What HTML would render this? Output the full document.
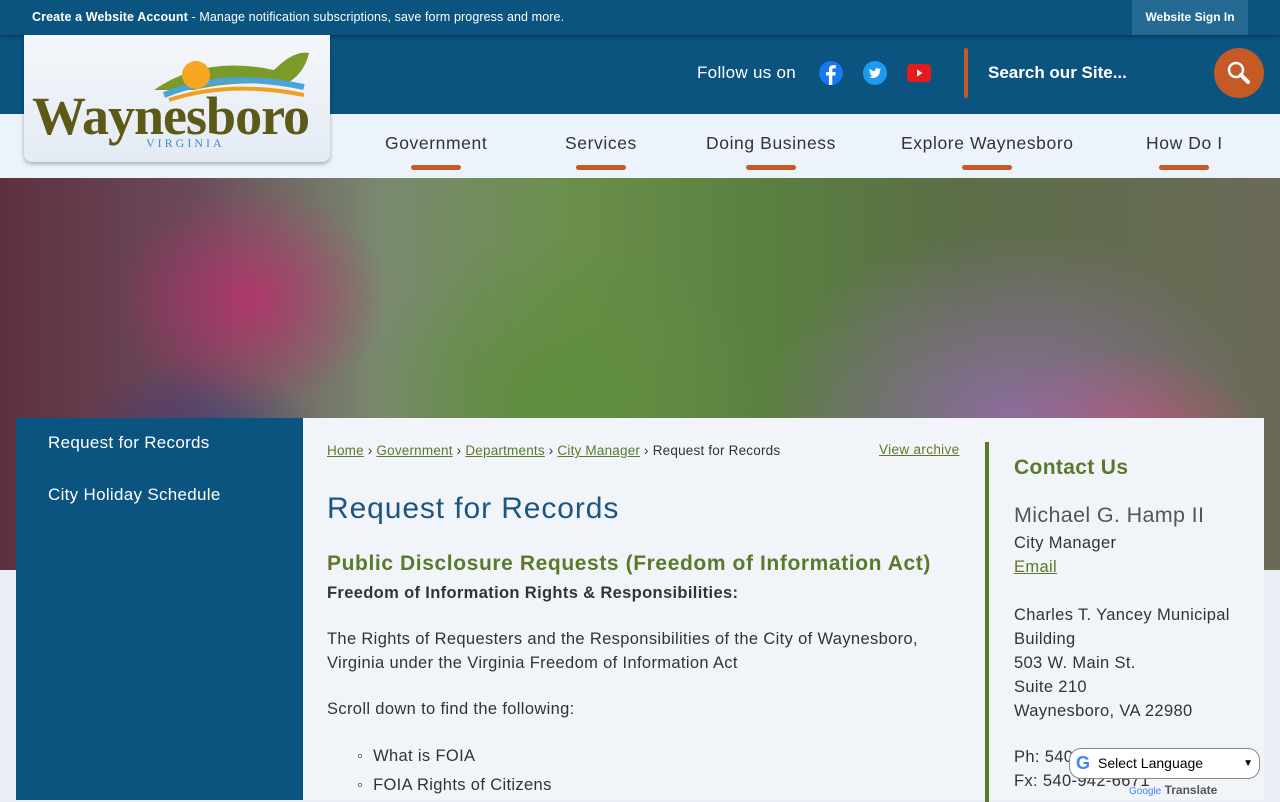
<!DOCTYPE html>
<html><head><meta charset="utf-8"><style>
*{margin:0;padding:0;box-sizing:border-box}
body{width:1280px;height:800px;overflow:hidden;font-family:"Liberation Sans",sans-serif;background:#e9eef4;position:relative}
.top{position:absolute;top:0;left:0;width:1280px;height:35px;background:#0b5480;color:#fff;font-size:12.5px;box-shadow:0 2px 3px rgba(0,0,0,.3);z-index:2}
.top .t{position:absolute;left:32px;top:10px;letter-spacing:.1px}
.top .si{position:absolute;left:1132px;top:0;width:116px;height:35px;background:#246a93;font-size:12px;font-weight:bold;text-align:center;line-height:35px}
.hdr{position:absolute;top:35px;left:0;width:1280px;height:79px;background:#0b5480}
.nav{position:absolute;top:114px;left:0;width:1280px;height:64px;background:#edf3fa}
.nav a{position:absolute;top:19px;font-size:17.5px;color:#333;text-decoration:none;letter-spacing:.6px}
.nav a:after{content:"";position:absolute;left:50%;margin-left:-25px;bottom:-16px;width:50px;height:5px;border-radius:3px;background:#c55a26}
.logo{position:absolute;left:24px;top:35px;width:306px;height:127px;background:linear-gradient(#f4f7fb,#e4ebf3);border-radius:0 0 8px 8px;box-shadow:0 2px 4px rgba(0,0,0,.3);z-index:3}
.logo .w{position:absolute;left:8px;top:50px;font-family:"Liberation Serif",serif;font-weight:bold;font-size:54px;color:#5d5a17;letter-spacing:-1px}
.logo .v{position:absolute;left:122px;top:101px;font-family:"Liberation Serif",serif;font-size:12px;color:#3d8bc4;letter-spacing:3px}
.hero{position:absolute;top:178px;left:0;width:1280px;height:392px;background:
radial-gradient(ellipse 140px 110px at 250px 120px,rgba(200,40,110,.7),transparent),
radial-gradient(ellipse 150px 150px at 200px 330px,rgba(40,50,150,.8),transparent),
radial-gradient(ellipse 200px 160px at 560px 220px,#5e8d3d,transparent),
radial-gradient(ellipse 250px 200px at 1010px 250px,rgba(150,110,180,.8),transparent),
radial-gradient(ellipse 150px 100px at 1120px 270px,rgba(220,70,90,.8),transparent),
linear-gradient(90deg,#5e3040 0%,#6a4a5a 15%,#7a8a70 30%,#6a8f4a 45%,#5a8040 60%,#5c6e48 75%,#6b6a58 100%)}
.side{position:absolute;left:16px;top:418px;width:287px;height:382px;background:#0b5480;color:#fff;font-size:17px;letter-spacing:.3px}
.side div{position:absolute;left:32px}
.main{position:absolute;left:303px;top:418px;width:961px;height:382px;background:#f1f5fa;color:#333;font-size:16.5px;letter-spacing:.35px}
.main a{color:#5a7a2a;text-decoration:underline}
.bc{position:absolute;left:24px;top:25px;font-size:13.5px;letter-spacing:.2px}
.va{position:absolute;left:576px;top:24px;font-size:13.5px}
h1{position:absolute;left:24px;top:74px;font-size:30px;font-weight:normal;color:#1d5580;letter-spacing:.9px}
h2{position:absolute;left:24px;top:134px;font-size:21px;color:#5a7a2a;letter-spacing:.6px}
.p{position:absolute;left:24px;line-height:24px}
.rb{position:absolute;left:682px;top:24px;width:4px;height:360px;background:#5a7a2a}
.ct{position:absolute;left:711px;line-height:24px}
</style></head><body>
<div class="top"><span class="t"><b>Create a Website Account</b> - Manage notification subscriptions, save form progress and more.</span><div class="si">Website Sign In</div></div>
<div class="hdr">
<span style="position:absolute;left:697px;top:28px;color:#fff;font-size:17px;letter-spacing:.3px">Follow us on</span>
<svg style="position:absolute;left:819px;top:26px" width="24" height="24"><circle cx="12" cy="12" r="12" fill="#1877f2"/><path d="M13.3 24V14.5h3l.5-3.4h-3.5V9c0-1 .4-1.7 1.8-1.7h1.8V4.3a22 22 0 0 0-2.7-.2c-2.6 0-4.3 1.6-4.3 4.5v2.5H7v3.4h2.9V24z" fill="#fff"/></svg>
<svg style="position:absolute;left:863px;top:26px" width="24" height="24"><circle cx="12" cy="12" r="12" fill="#1d9bf0"/><path d="M18 8.3a5 5 0 0 1-1.4.4 2.5 2.5 0 0 0 1.1-1.4 5 5 0 0 1-1.6.6 2.5 2.5 0 0 0-4.2 2.3A7 7 0 0 1 6.8 7.6a2.5 2.5 0 0 0 .8 3.3 2.5 2.5 0 0 1-1.1-.3 2.5 2.5 0 0 0 2 2.4 2.5 2.5 0 0 1-1.1.1 2.5 2.5 0 0 0 2.3 1.7A5 5 0 0 1 6 15.9a7 7 0 0 0 10.8-6.3A5 5 0 0 0 18 8.3z" fill="#fff"/></svg>
<svg style="position:absolute;left:907px;top:29px" width="24" height="18"><rect width="24" height="18" rx="4" fill="#e41b1b"/><path d="M10 5.5v7l5.5-3.5z" fill="#fff"/></svg>
<div style="position:absolute;left:964px;top:13px;width:4px;height:50px;background:#c55a26;border-radius:2px"></div>
<span style="position:absolute;left:988px;top:28px;color:#fff;font-size:17px;font-weight:bold">Search our Site...</span>
<div style="position:absolute;left:1214px;top:13px;width:50px;height:50px;border-radius:50%;background:#c55a26"></div>
<svg style="position:absolute;left:1226px;top:25px" width="26" height="26"><circle cx="10" cy="10" r="7" fill="none" stroke="#fff" stroke-width="2.5"/><path d="M15 15l7 7" stroke="#fff" stroke-width="4" stroke-linecap="round"/></svg>
</div>
<div class="nav">
<a style="left:385px">Government</a><a style="left:565px">Services</a><a style="left:706px">Doing Business</a><a style="left:901px">Explore Waynesboro</a><a style="left:1146px">How Do I</a>
</div>
<div class="logo">
<svg style="position:absolute;left:110px;top:10px" width="190" height="60"><path d="M20 45 Q70 10 140 25 Q160 5 175 8 Q170 30 150 40 Q100 35 60 45Z" fill="#7a9a2a"/><path d="M30 50 Q90 25 170 42" stroke="#4aa4d8" stroke-width="6" fill="none"/><path d="M35 55 Q95 35 170 50" stroke="#f0a020" stroke-width="4" fill="none"/><circle cx="62" cy="30" r="14" fill="#f5a623"/></svg>
<span class="w">Waynesboro</span><span class="v">VIRGINIA</span></div>
<div class="hero"></div>
<div class="side"><div style="top:15px">Request for Records</div><div style="top:67px">City Holiday Schedule</div></div>
<div class="main">
<div class="bc"><a>Home</a> › <a>Government</a> › <a>Departments</a> › <a>City Manager</a> › Request for Records</div>
<div class="va"><a>View archive</a></div>
<h1>Request for Records</h1>
<h2>Public Disclosure Requests (Freedom of Information Act)</h2>
<div class="p" style="top:163px;font-weight:bold">Freedom of Information Rights &amp; Responsibilities:</div>
<div class="p" style="top:209px">The Rights of Requesters and the Responsibilities of the City of Waynesboro,<br>Virginia under the Virginia Freedom of Information Act</div>
<div class="p" style="top:279px">Scroll down to find the following:</div>
<div class="p" style="top:326px;left:54px">◦&nbsp;&nbsp;What is FOIA</div>
<div class="p" style="top:355px;left:54px">◦&nbsp;&nbsp;FOIA Rights of Citizens</div>
<div class="rb"></div>
<div class="ct" style="top:38px;font-size:21px;font-weight:bold;color:#5a7a2a">Contact Us</div>
<div class="ct" style="top:85px;font-size:21.5px;color:#555">Michael G. Hamp II</div>
<div class="ct" style="top:113px">City Manager<br><a>Email</a></div>
<div class="ct" style="top:185px">Charles T. Yancey Municipal<br>Building<br>503 W. Main St.<br>Suite 210<br>Waynesboro, VA 22980</div>
<div class="ct" style="top:327px">Ph: 540-942-6669<br>Fx: 540-942-6671</div>
</div>
<div style="position:absolute;left:1069px;top:748px;width:191px;height:31px;border:1px solid #888;border-radius:12px;background:#fff;font-size:14px;line-height:29px;padding-left:28px">Select Language<span style="position:absolute;right:6px;font-size:10px">▼</span>
<span style="position:absolute;left:6px;top:0;font-weight:bold;color:#4285f4;font-size:18px">G</span></div>
<div style="position:absolute;left:1129px;top:783px;font-size:12px;color:#555"><span style="color:#4285f4;font-size:10px">Google</span> <b>Translate</b></div>
</body></html>
